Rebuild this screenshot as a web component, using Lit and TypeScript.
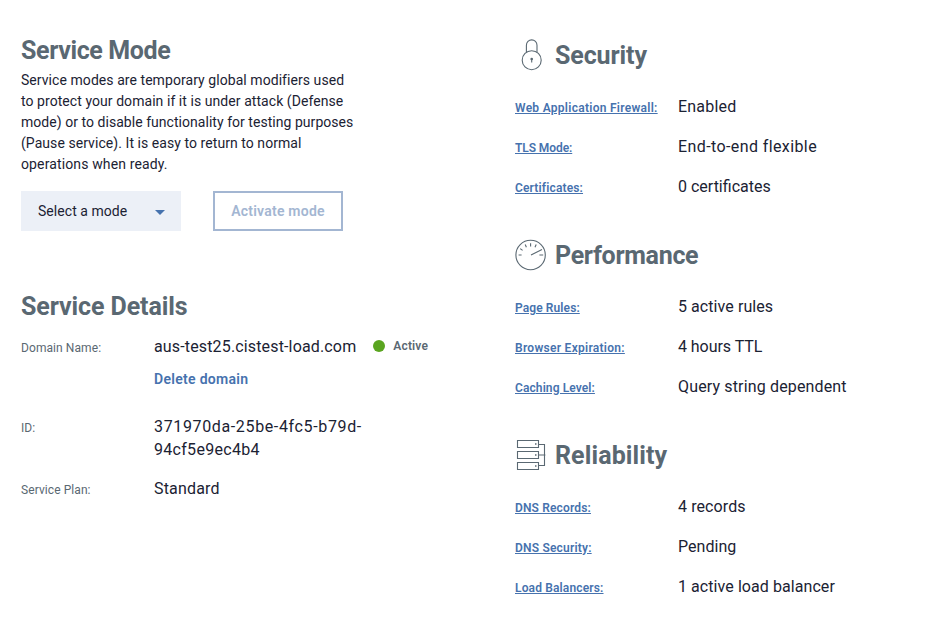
import { LitElement, html, css, svg } from "lit";
import { customElement, property } from "lit/decorators.js";
import { styleMap } from "lit/directives/style-map.js";

type IconName = "lock" | "gauge" | "servers";
/** A piece of text and its letter spacing in pixels. */
interface Label { text: string; tracking: number }
interface Row { label: Label; value: Label }
interface Section { title: Label; icon: IconName; rows: Row[] }

const t = (text: string, tracking = 0): Label => ({ text, tracking });
const spaced = (l: Label) => html`<span style=${styleMap({ letterSpacing: `${l.tracking}px` })}>${l.text}</span>`;

const sections: Section[] = [
  { title: t("Security", -0.1), icon: "lock", rows: [
    { label: t("Web Application Firewall:", 0.28), value: t("Enabled", 0.2) },
    { label: t("TLS Mode:", -0.08), value: t("End-to-end flexible", 0.4) },
    { label: t("Certificates:", 0.15), value: t("0 certificates") },
  ] },
  { title: t("Performance", -0.3), icon: "gauge", rows: [
    { label: t("Page Rules:", 0.1), value: t("5 active rules", 0.07) },
    { label: t("Browser Expiration:", 0.28), value: t("4 hours TTL", -0.05) },
    { label: t("Caching Level:", 0.1), value: t("Query string dependent", 0.15) },
  ] },
  { title: t("Reliability", 0.1), icon: "servers", rows: [
    { label: t("DNS Records:", 0.15), value: t("4 records", 0.1) },
    { label: t("DNS Security:", 0.2), value: t("Pending", 0.05) },
    { label: t("Load Balancers:", 0.15), value: t("1 active load balancer", 0.07) },
  ] },
];

const intro: Label[] = [
  t("Service modes are temporary global modifiers used", 0.06),
  t("to protect your domain if it is under attack (Defense", 0.06),
  t("mode) or to disable functionality for testing purposes", 0.04),
  t("(Pause service). It is easy to return to normal", 0.06),
  t("operations when ready.", 0.13),
];

const icons = {
  lock: svg`<circle cx="16.7" cy="21.2" r="9.5"/>
    <path d="M11.4 13.2V6.2a5.3 5.3 0 0 1 10.6 0v7"/>
    <circle class="solid" cx="16.7" cy="20" r="1.3"/><path d="M16.7 20v3.6"/>`,
  gauge: svg`<circle cx="15.6" cy="16" r="14.7"/>
    <path d="M15.6 4.2v3.3M10.2 5.5l1.2 2.8M5.2 9.6l2.4 1.8M3.6 16h3M21.2 5.5l-1.2 2.8M24.4 16h3.8M16 16l11-5.4"/>`,
  servers: svg`<path d="M2.5 1.5h21v7h-21zM2.5 12.5h21v7h-21zM2.5 23.5h21v7h-21zM23.5 5.5h6v21h-6M23.5 16h6.9"/>
    <path class="solid" d="M20 4.3h1.5v1.5H20zM20 15.3h1.5v1.5H20zM20 26.3h1.5v1.5H20z"/>`,
};

@customElement("info-section")
export class InfoSection extends LitElement {
  @property({ attribute: false }) section!: Section;

  static styles = css`
    :host { display: block; height: 200px; }
    .head { display: flex; align-items: center; height: 32px; gap: 8px; }
    .icon { width: 32px; height: 32px; fill: none; stroke: #5a6872; stroke-width: 1.1; }
    .solid { fill: #5a6872; stroke: none; }
    h2 { margin: 0; padding-top: 2px; font-size: 25px; line-height: 32px; font-weight: 700; color: #5a6872; white-space: nowrap; }
    .rows { padding-top: 15px; }
    .row { display: flex; align-items: center; height: 40px; }
    .link { width: 163px; padding-top: 3px; font-size: 12px; font-weight: 600; color: #4672ae; text-decoration: underline; white-space: nowrap; }
    .value { font-size: 16px; color: #1b2233; white-space: nowrap; }
  `;

  render() {
    const s = this.section;
    return html`
      <div class="head">
        <svg class="icon" viewBox="0 0 32 32">${icons[s.icon]}</svg>
        <h2>${spaced(s.title)}</h2>
      </div>
      <div class="rows">
        ${s.rows.map((r) => html`<div class="row">
          <div class="link">${spaced(r.label)}</div><div class="value">${spaced(r.value)}</div>
        </div>`)}
      </div>`;
  }
}

@customElement("app-root")
export class AppRoot extends LitElement {
  static styles = css`
    :host { display: flex; box-sizing: border-box; width: 935px; height: 627px; padding: 0 21px; overflow: hidden;
      background: #fff; color: #1b2233; font-family: Roboto, "Liberation Sans", sans-serif; }
    .left { width: 494px; padding-top: 35px; }
    .right { padding-top: 39px; }
    h2 { margin: 0; font-size: 25px; line-height: 32px; font-weight: 700; color: #5a6872; white-space: nowrap; }
    .intro { margin: 3px 0 0; font-size: 14px; line-height: 21px; white-space: nowrap; }
    .line { display: block; }
    .actions { display: flex; gap: 32px; margin-top: 16px; }
    .select { display: flex; align-items: center; justify-content: space-between; box-sizing: border-box; width: 160px; height: 40px;
      padding: 0 16px 0 17px; background: #ecf0f7; font-size: 14px; }
    .caret { width: 10px; height: 5px; fill: #4672ae; margin-top: 2px; }
    .activate { box-sizing: border-box; width: 130px; height: 40px; padding: 0; border: 2px solid #a3b6d2; background: #fff;
      color: #a3b6d2; font: 600 14px Roboto, "Liberation Sans", sans-serif; letter-spacing: 0.22px; }
    .details { margin-top: 60px; }
    .grid { display: grid; grid-template-columns: 133px 1fr; font-size: 16px; line-height: 23px; margin-top: 12px; }
    .label { font-size: 12px; color: #5a6872; padding-top: 2px; letter-spacing: 0.08px; }
    .domain { display: flex; align-items: center; }
    .dot { width: 12px; height: 12px; border-radius: 50%; background: #5aa520; margin: -1px 0 0 17px; }
    .status { margin-left: 8px; font-size: 12px; font-weight: 600; color: #5a6872; letter-spacing: 0.15px; }
    .delete { height: 57px; padding-top: 10px; box-sizing: border-box; font-size: 14px; font-weight: 600; color: #4672ae; letter-spacing: 0.3px; }
    .id { margin-bottom: 16px; }
  `;

  render() {
    return html`
      <div class="left">
        <h2>${spaced(t("Service Mode", -0.38))}</h2>
        <p class="intro">${intro.map((l) => html`<span class="line">${spaced(l)}</span>`)}</p>
        <div class="actions">
          <div class="select">${spaced(t("Select a mode", 0.05))}<svg class="caret" viewBox="0 0 10 5"><path d="M0 0h10L5 5z"/></svg></div>
          <button class="activate" disabled>Activate mode</button>
        </div>
        <div class="details">
          <h2>${spaced(t("Service Details", -0.1))}</h2>
          <div class="grid">
            <div class="label">Domain Name:</div>
            <div>
              <div class="domain">${spaced(t("aus-test25.cistest-load.com", 0.15))}<i class="dot"></i><span class="status">Active</span></div>
              <div class="delete">Delete domain</div>
            </div>
            <div class="label">ID:</div>
            <div class="id">${spaced(t("371970da-25be-4fc5-b79d-", 0.64))}<br>${spaced(t("94cf5e9ec4b4", 0.3))}</div>
            <div class="label">Service Plan:</div>
            <div>${spaced(t("Standard", 0.17))}</div>
          </div>
        </div>
      </div>
      <div class="right">
        ${sections.map((s) => html`<info-section .section=${s}></info-section>`)}
      </div>`;
  }
}
